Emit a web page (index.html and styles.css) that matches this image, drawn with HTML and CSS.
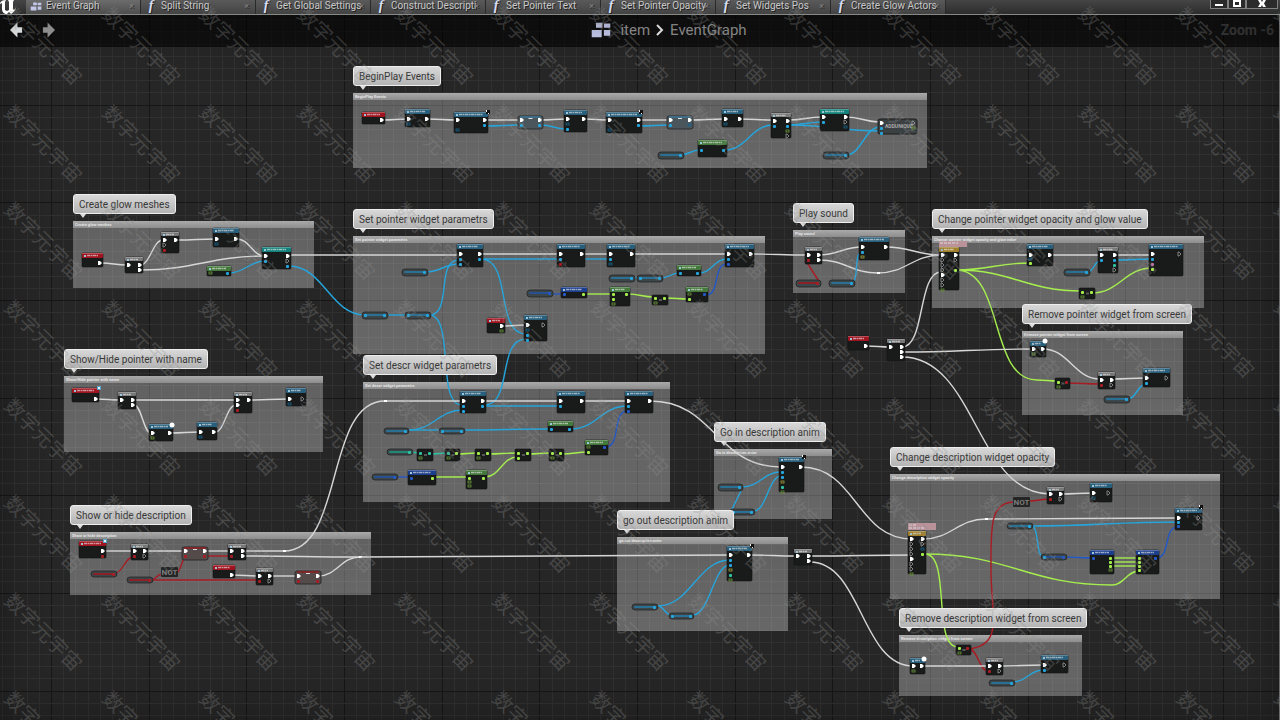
FILE: index.html
```html
<!DOCTYPE html>
<html lang="en">
<head>
    <meta charset="UTF-8">
    <meta name="viewport" content="width=device-width, initial-scale=1.0">
    <title>Event Graph</title>
    <link rel="stylesheet" href="styles.css">
</head>
<body>
    <!-- Tabs -->
    <header class="titlebar">
        <svg class="logo" viewBox="0 0 17 14"><path d="M0 3C1 1 3 0 6 0L5 2V10L7 11L9 10V2L8 0H14L13 2V9L14 10L16 8C15 11 13 13 11 14L9 12L7 14C4 14 2 12 2 9V3L0 4Z"/></svg>
        <nav class="tabs">
            <button class="tab active"><svg class="grid-icon" viewBox="0 0 28 22"><path d="M7 1h9v7H7zM18 2h9v6h-9zM1 11h14v10H1zM18 11h9v8h-9z"/></svg>Event Graph<span class="close">×</span></button>
            <button class="tab"><i class="fn">f</i>Split String<span class="close">×</span></button>
            <button class="tab"><i class="fn">f</i>Get Global Settings<span class="close">×</span></button>
            <button class="tab"><i class="fn">f</i>Construct Descripti<span class="close">×</span></button>
            <button class="tab"><i class="fn">f</i>Set Pointer Text<span class="close">×</span></button>
            <button class="tab"><i class="fn">f</i>Set Pointer Opacity<span class="close">×</span></button>
            <button class="tab"><i class="fn">f</i>Set Widgets Pos<span class="close">×</span></button>
            <button class="tab"><i class="fn">f</i>Create Glow Actors<span class="close">×</span></button>
        </nav>
        <div class="window-buttons">
            <button aria-label="Minimize"><svg viewBox="0 0 10 8"><path d="M1 4h8v2H1z"/></svg></button>
            <button aria-label="Restore"><svg viewBox="0 0 10 8"><path fill-rule="evenodd" d="M1 0h8v7H1zM3 2v3h4V2z"/></svg></button>
            <button class="wide" aria-label="Close"><svg viewBox="0 0 10 8"><path d="M1 0h3l1 2 1-2h3L7 3.500 9 7H6L5 5 4 7H1l2-3.500z"/></svg></button>
        </div>
    </header>

    <main class="graph">
        <svg id="grid" class="layer"></svg>

        <div class="breadcrumb">
            <div class="history">
                <button aria-label="Back"><svg viewBox="0 0 14 16"><path d="M0 8l8-8v5h5v6H8v5z"/></svg></button>
                <button aria-label="Forward" class="dim"><svg viewBox="0 0 14 16"><path d="M14 8L6 0v5H1v6h5v5z"/></svg></button>
            </div>
            <div class="path">
                <svg class="grid-icon" viewBox="0 0 28 22"><path d="M7 1h9v7H7zM18 2h9v6h-9zM1 11h14v10H1zM18 11h9v8h-9z"/></svg>
                <a href="#">item</a>
                <svg class="chevron" viewBox="0 0 8 12"><path d="M1 1l5 5-5 5"/></svg>
                <a href="#">EventGraph</a>
            </div>
            <div class="zoom">Zoom -6</div>
        </div>

        <!-- Comment boxes -->
        <section class="comment begin-play"><h2>BeginPlay Events</h2><p class="bubble">BeginPlay Events</p></section>
        <section class="comment glow-meshes"><h2>Create glow meshes</h2><p class="bubble">Create glow meshes</p></section>
        <section class="comment pointer-name"><h2>Show/Hide pointer with name</h2><p class="bubble">Show/Hide pointer with name</p></section>
        <section class="comment show-descr"><h2>Show or hide description</h2><p class="bubble">Show or hide description</p></section>
        <section class="comment pointer-params"><h2>Set pointer widget parametrs</h2><p class="bubble">Set pointer widget parametrs</p></section>
        <section class="comment descr-params"><h2>Set descr widget parametrs</h2><p class="bubble">Set descr widget parametrs</p></section>
        <section class="comment play-sound"><h2>Play sound</h2><p class="bubble">Play sound</p></section>
        <section class="comment pointer-opacity"><h2>Change pointer widget opacity and glow value</h2><p class="bubble">Change pointer widget opacity and glow value</p></section>
        <section class="comment remove-pointer"><h2>Remove pointer widget from screen</h2><p class="bubble">Remove pointer widget from screen</p></section>
        <section class="comment go-in"><h2>Go in description anim</h2><p class="bubble">Go in description anim</p></section>
        <section class="comment go-out"><h2>go out description anim</h2><p class="bubble">go out description anim</p></section>
        <section class="comment descr-opacity"><h2>Change description widget opacity</h2><p class="bubble">Change description widget opacity</p></section>
        <section class="comment remove-descr"><h2>Remove description widget from screen</h2><p class="bubble">Remove description widget from screen</p></section>

        <svg id="nodes" class="layer"></svg>
    </main>

    <svg id="watermark" class="watermark"></svg>

    <script src="graph.js"></script>
</body>
</html>
```

FILE: styles.css
```css
* {
    box-sizing: border-box;
}

body {
    margin: 0;
    min-height: 100vh;
    display: flex;
    flex-direction: column;
    position: relative;
    overflow: hidden;
    font-family: Roboto, 'Noto Sans CJK SC', sans-serif;
    font-size: 10px;
    background-color: #262626;
    color: #ccc;
}

button {
    margin: 0;
    padding: 0;
    border: none;
    background: none;
    color: inherit;
    font: inherit;
    cursor: pointer;
}

/* Title bar */
.titlebar {
    height: 15px;
    display: flex;
    background: linear-gradient(#454545, #2c2c2c);
    border-bottom: 1px solid #868986;
}

.logo {
    width: 17px;
    height: 14px;
    margin-right: 9px;
    fill: #fff;
}

.tabs {
    display: flex;
    flex: 1;
}

.tab {
    position: relative;
    width: 115px;
    height: 14px;
    padding: 0 0 2px 4px;
    display: flex;
    align-items: center;
    gap: 4px;
    line-height: 12px;
    white-space: nowrap;
    color: #c8c8c8;
    text-shadow: 1px 1px 0 #222;
    background: linear-gradient(#5a5a5a, #434343);
    border-right: 1px solid #2a2a2a;
}

.tab.active {
    background: linear-gradient(#6c6c6c, #4e4e4e);
}

.tab .grid-icon {
    width: 12px;
    height: 9px;
}

.grid-icon {
    fill: #c3c8ea;
}

.fn {
    flex: none;
    width: 12px;
    text-align: center;
    font: italic bold 14px/12px 'Liberation Serif', serif;
    color: #d6def5;
}

.close {
    position: absolute;
    right: 6px;
    top: 0;
    color: #858585;
    font-size: 9px;
}

.window-buttons {
    display: flex;
    height: 9px;
    margin-right: 2px;
}

.window-buttons button {
    width: 18px;
    height: 9px;
    display: flex;
    justify-content: center;
    border: 1px solid #808080;
    border-top: none;
    background-color: #2b2b2b;
}

.window-buttons .wide {
    width: 32px;
}

.window-buttons svg {
    width: 10px;
    height: 8px;
    fill: #fff;
}

/* Graph */
.graph {
    flex: 1;
    position: relative;
    overflow: hidden;
    border-right: 1px solid #6a6a6a;
    background-color: #262626;
}

.graph::after {
    content: '';
    position: absolute;
    inset: 0;
    box-shadow: inset 0 0 40px rgba(0, 0, 0, 0.35);
    pointer-events: none;
}

.layer {
    position: absolute;
    left: 0;
    top: 0;
    width: 100%;
    height: 100%;
    pointer-events: none;
}

#nodes {
    z-index: 2;
}

.breadcrumb {
    position: relative;
    height: 32px;
    padding: 0 5px 2px 10px;
    display: grid;
    grid-template-columns: 1fr auto 1fr;
    align-items: center;
    background-color: rgba(0, 0, 0, 0.6);
}

.history {
    display: flex;
    gap: 19px;
}

.history svg {
    display: block;
    width: 13px;
    height: 16px;
    fill: #f4f8f8;
}

.history .dim svg {
    fill: #999;
}

.path {
    display: flex;
    align-items: center;
    gap: 6px;
    margin-left: 54px;
    font-size: 15px;
}

.path .grid-icon {
    width: 20px;
    height: 16px;
    margin-right: 3px;
}

.path a {
    color: #8f8f8f;
    text-decoration: none;
}

.chevron {
    width: 8px;
    height: 12px;
    fill: none;
    stroke: #eee;
    stroke-width: 2;
}

.zoom {
    justify-self: end;
    font-size: 14px;
    font-weight: bold;
    color: #363636;
}

/* Comments */
.comment {
    position: absolute;
    background: linear-gradient(rgba(255, 255, 255, 0.27), rgba(255, 255, 255, 0.3));
}

.comment h2 {
    margin: 0;
    height: 7px;
    padding: 1px 2px;
    font-size: 4px;
    line-height: 6px;
    font-weight: bold;
    white-space: nowrap;
    color: #e4e4e4;
    background: linear-gradient(#aaa, #8d8d8d);
}

.bubble {
    position: absolute;
    z-index: 3;
    left: 0;
    top: -27px;
    height: 20px;
    margin: 0;
    padding: 0 5px;
    font-size: 10px;
    line-height: 19px;
    white-space: nowrap;
    color: #383838;
    background: linear-gradient(#d8d8d8, #b4b4b4);
    border: 1px solid #eee;
    border-radius: 3px;
}

.bubble::after {
    content: '';
    position: absolute;
    left: 6px;
    top: 19px;
    border: 3px solid transparent;
    border-top: 4px solid #ddd;
    border-bottom: none;
}

.begin-play { left: 353px; top: 78px; width: 574px; height: 75px; }
.glow-meshes { left: 73px; top: 206px; width: 241px; height: 67px; }
.pointer-name { left: 64px; top: 361px; width: 259px; height: 76px; }
.show-descr { left: 70px; top: 517px; width: 301px; height: 63px; }
.pointer-params { left: 353px; top: 221px; width: 412px; height: 118px; }
.descr-params { left: 363px; top: 367px; width: 307px; height: 120px; }
.play-sound { left: 793px; top: 215px; width: 112px; height: 63px; }
.pointer-opacity { left: 932px; top: 221px; width: 272px; height: 72px; }
.remove-pointer { left: 1022px; top: 316px; width: 161px; height: 84px; }
.go-in { left: 714px; top: 434px; width: 118px; height: 70px; }
.go-out { left: 617px; top: 522px; width: 171px; height: 94px; }
.descr-opacity { left: 890px; top: 459px; width: 330px; height: 125px; }
.remove-descr { left: 899px; top: 620px; width: 183px; height: 61px; }

/* Nodes and wires */
.wire {
    fill: none;
    stroke-width: 1.400;
}

.node-text {
    font-size: 5px;
    font-weight: bold;
    fill: #aaa;
}

.node-text.not {
    font-size: 8px;
    fill: #7c7c7c;
}

.watermark {
    position: absolute;
    z-index: 5;
    left: 0;
    top: 0;
    width: 100%;
    height: 100%;
    pointer-events: none;
    font-family: 'Noto Sans CJK SC', sans-serif;
    font-size: 20px;
    fill: rgba(145, 145, 145, 0.3);
}
```

FILE: graph.js
```js
const colors = {
    w: '#d6d6d6', b: '#25a5dc', U: '#2458c4', g: '#a5ee4e', r: '#a81c24', t: '#2fc0a0',
    B: '#17648c', G: '#6c9a3c', Y: '#a8a03a', p: '#c070a0'
};

const heads = {
    red: '#a01420', cyan: '#285f7c', gray: '#777', teal: '#12837c',
    green: '#437a3b', navy: '#1b3f8c', gold: '#a08028'
};

// type, x, y, width, height, left pins, right pins, first pin y, pin step
const nodes = [
    ['red', 362, 112, 23, 12, '', 'w', 8],
    ['cyan', 405, 109, 25, 18, 'wB', 'w', 10],
    ['cyan', 454, 112, 34, 21, 'w.B', 'wb', 8],
    ['set', 518, 116, 25, 13, 'wb', 'wb', 4],
    ['cyan', 564, 110, 23, 22, 'wBb', 'w', 9],
    ['cyan', 606, 112, 36, 21, 'w.B', 'wb', 8],
    ['set', 667, 116, 26, 13, 'wb', 'wB', 4],
    ['cyan', 722, 109, 21, 18, 'wB', 'w', 10],
    ['pill', 658, 152, 26, 7, '', 'b'],
    ['green', 698, 140, 29, 17, 'b', 'b', 10],
    ['gray', 771, 113, 20, 25, 'wb', 'wbGo', 8],
    ['teal', 820, 109, 29, 22, 'wb', 'woB', 8],
    ['unique', 878, 119, 39, 15, 'wbb', 'oG', 4],
    ['pill', 823, 152, 26, 7, '', 'b'],

    ['red', 82, 253, 21, 14, '', 'w', 10],
    ['gray', 125, 257, 18, 16, 'w', 'ww', 8],
    ['gray', 161, 232, 18, 21, 'wor', 'w', 8],
    ['cyan', 213, 228, 26, 19, 'wB', 'w', 11],
    ['teal', 262, 247, 29, 22, 'wb', 'wob', 9],
    ['green', 207, 266, 24, 10, 'G', 'b', 7],

    ['red', 72, 388, 27, 14, '', 'w', 11],
    ['gray', 118, 392, 18, 17, 'w', 'ww', 8],
    ['cyan', 149, 424, 24, 17, 'wG', 'w', 9],
    ['cyan', 197, 422, 20, 18, 'wB', 'w', 10],
    ['gray', 234, 392, 18, 21, 'wwr', 'w', 8],
    ['cyan', 286, 388, 20, 18, 'wB', 'o', 11],

    ['pill', 402, 269, 26, 7, '', 'b'],
    ['cyan', 457, 244, 26, 23, 'wbb', 'wb', 10],
    ['cyan', 557, 244, 28, 23, 'wbr', 'w', 10],
    ['cyan', 607, 244, 28, 23, 'wbB', 'w', 10],
    ['cyan', 725, 244, 29, 23, 'wbU', 'w', 10],
    ['pill', 609, 275, 26, 7, '', 'b'],
    ['pill', 637, 275, 26, 7, 'b', 'b'],
    ['green', 677, 265, 24, 11, 'b', 'b', 8],
    ['pillBlue', 527, 290, 26, 7, '', 'U'],
    ['navy', 561, 287, 26, 11, 'U', 'g', 7],
    ['green', 610, 287, 20, 19, 'ggG', 'g', 7],
    ['op', 652, 295, 16, 10, 'gG', 'g', 3],
    ['green', 686, 287, 22, 15, 'Gg', 'U', 7],
    ['red', 487, 318, 18, 15, '', 'wG', 8],
    ['cyan', 524, 315, 23, 26, 'wBbb', 'o', 10],
    ['pill', 362, 312, 26, 7, 'b', 'b'],
    ['pill', 405, 312, 26, 7, 'b', 'b'],

    ['gray', 805, 247, 17, 17, 'wr', 'ww', 8],
    ['cyan', 859, 237, 30, 23, 'wbY', 'w', 10],
    ['pillRed', 796, 280, 25, 7, '', 'r'],
    ['pill', 829, 280, 26, 7, '', 'b'],

    ['gold', 939, 247, 20, 43, 'wooowooG', 'wo.g', 8],
    ['cyan', 1027, 244, 26, 22, 'wBg', 'w', 11, 4],
    ['gray', 1098, 247, 20, 26, 'wb', 'wbto', 8],
    ['cyan', 1149, 244, 34, 32, 'wbpg', 'o', 10],
    ['pill', 1064, 269, 26, 7, '', 'b'],
    ['op', 1079, 288, 16, 11, 'gG', 'g', 4],
    ['red', 848, 336, 21, 14, '', 'w', 10],
    ['gray', 887, 339, 18, 22, 'w', 'www', 8],

    ['cyan', 1030, 341, 16, 16, 'wG', 'w', 8],
    ['op', 1055, 378, 15, 11, 'gG', 'r', 4],
    ['gray', 1098, 372, 17, 17, 'wr', 'wo', 8],
    ['cyan', 1143, 368, 27, 19, 'wb', 'o', 10],
    ['pill', 1104, 396, 26, 7, '', 'b'],

    ['cyan', 460, 391, 26, 22, 'wbb', 'wb', 10],
    ['cyan', 557, 391, 28, 22, 'wb', 'w', 10],
    ['cyan', 625, 391, 28, 22, 'wbU', 'w', 10],
    ['pill', 384, 428, 25, 6, '', 'b'],
    ['pill', 439, 428, 26, 6, 'b', 'b'],
    ['green', 548, 421, 25, 11, 'b', 'b', 8],
    ['green', 585, 440, 23, 15, 'Gg', 'U', 7],
    ['pillTeal', 387, 449, 26, 6, '', 't'],
    ['op', 417, 449, 16, 12, 'tG', 't', 4],
    ['op', 445, 449, 15, 12, 'tG', 'g', 4],
    ['op', 475, 449, 16, 12, 'gG', 'g', 4],
    ['op', 515, 449, 16, 12, 'gg', 'g', 4],
    ['op', 549, 449, 15, 12, 'gG', 'g', 4],
    ['pillBlue', 372, 474, 26, 6, '', 'U'],
    ['navy', 408, 470, 28, 15, 'U', 'g', 8],
    ['green', 466, 470, 21, 19, 'gGG', 'g', 8, 4],

    ['red', 79, 541, 27, 17, '', 'wr', 10],
    ['gray', 131, 544, 17, 16, 'wr', 'wo', 7],
    ['setRed', 182, 547, 26, 13, 'wr', 'wr', 4],
    ['gray', 228, 544, 18, 16, 'wr', 'ww', 7],
    ['pillRed', 91, 571, 26, 6, '', 'r'],
    ['pillRed', 127, 577, 26, 6, '', 'r'],
    ['not', 161, 567, 17, 10, '', ''],
    ['red', 213, 565, 22, 13, '', 'w', 10],
    ['gray', 256, 568, 17, 17, 'wr', 'wo', 8],
    ['setRed', 295, 571, 26, 13, 'wr', 'wr', 5],

    ['cyan', 779, 457, 25, 35, 'wbbYtG', 'w', 10],
    ['pill', 718, 484, 25, 7, '', 'b'],
    ['pill', 730, 509, 25, 6, 'b', 'b'],
    ['cyan', 727, 546, 25, 35, 'wbbYtG', 'w', 9],
    ['pill', 632, 604, 26, 6, '', 'b'],
    ['pill', 669, 613, 25, 6, 'b', 'b'],
    ['gray', 794, 549, 18, 16, 'w', 'ww', 7],

    ['gold', 908, 531, 18, 43, 'wooowooG', 'woBg', 8],
    ['gray', 1047, 487, 17, 17, 'wr', 'wo', 7],
    ['cyan', 1090, 483, 22, 19, 'wB', 'o', 10],
    ['not', 1013, 497, 17, 10, '', ''],
    ['cyan', 1175, 508, 27, 22, 'wbU', 'o', 10, 4],
    ['pill', 1007, 523, 26, 6, '', 'b'],
    ['pillBlue', 1041, 554, 26, 6, 'b', 'U'],
    ['navy', 1090, 550, 24, 24, 'U', 'gggG', 8, 4],
    ['navy', 1136, 550, 23, 24, 'gggg', 'U', 8, 4],

    ['cyan', 910, 658, 15, 16, 'wG', 'w', 8],
    ['op', 956, 645, 15, 10, 'gG', 'r', 3],
    ['gray', 986, 658, 17, 17, 'wr', 'wo', 8],
    ['cyan', 1041, 655, 27, 18, 'wb', 'o', 10],
    ['pill', 989, 680, 26, 6, '', 'b']
];

// color, x1, y1, x2, y2, optional curve strength
const wires = [
    ['w', 383, 120, 407, 119], ['w', 428, 119, 456, 120], ['w', 486, 120, 520, 120], ['w', 541, 120, 566, 119],
    ['w', 585, 119, 608, 120], ['w', 640, 120, 669, 120], ['w', 691, 120, 724, 119], ['w', 740, 119, 773, 120],
    ['w', 789, 120, 822, 117], ['w', 846, 117, 880, 122], ['b', 486, 126, 520, 125], ['b', 541, 125, 566, 129],
    ['b', 640, 126, 669, 125], ['b', 680, 155, 700, 150], ['b', 725, 150, 773, 125], ['b', 789, 125, 822, 122],
    ['b', 789, 125, 880, 131], ['b', 846, 155, 880, 127],

    ['w', 101, 263, 127, 265], ['w', 140, 265, 163, 240], ['w', 177, 240, 216, 239], ['w', 140, 270, 265, 256],
    ['w', 237, 239, 265, 256], ['w', 289, 255, 459, 255], ['b', 229, 273, 265, 261], ['b', 289, 266, 365, 315],

    ['w', 96, 399, 120, 400], ['w', 134, 400, 236, 400], ['w', 134, 405, 151, 433], ['w', 171, 433, 199, 432],
    ['w', 215, 432, 236, 405], ['w', 249, 400, 288, 399],

    ['w', 481, 254, 559, 254], ['w', 583, 254, 609, 254], ['w', 633, 254, 727, 254], ['w', 751, 254, 807, 255],
    ['b', 426, 272, 459, 264], ['b', 386, 315, 407, 315], ['b', 429, 315, 459, 260, 0.8], ['b', 429, 315, 462, 405, 0.8],
    ['b', 481, 259, 559, 259], ['b', 583, 259, 609, 259], ['b', 481, 259, 526, 334, 0.7], ['b', 484, 405, 526, 339, 0.7],
    ['b', 633, 278, 639, 278], ['b', 661, 278, 679, 273], ['b', 699, 273, 727, 259],
    ['U', 551, 294, 563, 294], ['U', 706, 295, 727, 264, 0.7], ['g', 585, 294, 612, 294], ['g', 628, 294, 654, 297],
    ['g', 666, 298, 688, 299], ['w', 503, 326, 526, 325],

    ['w', 819, 255, 862, 247], ['w', 819, 260, 878, 273], ['w', 878, 273, 941, 255], ['w', 886, 247, 941, 255],
    ['r', 820, 283, 806, 261, 0], ['b', 851, 283, 862, 252, 0.8],

    ['w', 956, 255, 1030, 255], ['w', 1050, 255, 1100, 255], ['w', 1116, 255, 1152, 255], ['b', 1088, 272, 1100, 261],
    ['b', 1116, 260, 1152, 259], ['g', 956, 270, 1030, 263], ['g', 956, 270, 1082, 291], ['g', 1092, 293, 1152, 268],
    ['g', 956, 270, 1037, 380, 0.6], ['g', 1037, 380, 1058, 381], ['w', 866, 346, 890, 347],
    ['w', 902, 347, 941, 272, 0.6], ['w', 902, 352, 1032, 349], ['w', 902, 357, 1050, 494, 0.5],

    ['w', 1043, 349, 1100, 379], ['w', 1112, 379, 1146, 378], ['b', 1128, 399, 1146, 384], ['r', 1068, 383, 1100, 384],

    ['w', 284, 551, 385, 401, 0.6], ['w', 385, 401, 463, 401], ['w', 484, 401, 559, 401], ['w', 583, 401, 627, 401],
    ['w', 650, 401, 781, 467, 0.5], ['b', 409, 430, 463, 410], ['b', 409, 430, 441, 430], ['b', 463, 430, 550, 429],
    ['b', 571, 429, 627, 406], ['b', 484, 406, 559, 406], ['t', 411, 452, 419, 453], ['t', 431, 454, 447, 453],
    ['g', 458, 454, 477, 453], ['g', 488, 454, 517, 453], ['g', 528, 454, 551, 453], ['g', 562, 454, 588, 452],
    ['g', 485, 477, 517, 457], ['g', 434, 477, 468, 477], ['U', 396, 477, 410, 477], ['U', 606, 447, 627, 411, 0.7],

    ['w', 102, 551, 133, 551], ['w', 144, 551, 186, 551], ['w', 204, 551, 230, 551], ['w', 242, 551, 284, 551],
    ['w', 242, 556, 360, 557], ['w', 232, 575, 259, 576], ['w', 269, 576, 299, 576], ['w', 318, 576, 360, 557],
    ['w', 360, 557, 730, 555], ['r', 115, 573, 133, 557], ['r', 151, 580, 162, 574], ['r', 151, 580, 258, 580],
    ['r', 177, 572, 186, 557], ['r', 204, 556, 230, 556],

    ['w', 801, 467, 912, 539, 0.5], ['b', 742, 487, 781, 472], ['b', 742, 487, 732, 511, -0.2], ['b', 754, 511, 781, 476],
    ['w', 750, 555, 797, 556], ['w', 810, 556, 912, 555], ['w', 810, 562, 913, 666, 0.5], ['b', 658, 606, 730, 560],
    ['b', 658, 606, 671, 615], ['b', 693, 615, 730, 565],

    ['w', 923, 539, 986, 519], ['w', 986, 519, 1178, 518], ['w', 1061, 494, 1093, 493], ['b', 1031, 526, 1178, 522],
    ['b', 1031, 526, 1044, 557, 0.7], ['U', 1065, 557, 1093, 558], ['U', 1156, 558, 1178, 527, 0.7],
    ['g', 1110, 558, 1139, 558], ['g', 1110, 562, 1139, 562], ['g', 1110, 566, 1139, 566],
    ['g', 925, 554, 1112, 585], ['g', 1112, 585, 1139, 571], ['g', 925, 554, 958, 647, 0.8],
    ['r', 1029, 501, 1050, 499], ['r', 969, 649, 988, 671],

    ['w', 923, 666, 988, 666], ['w', 1000, 666, 1043, 665], ['b', 1013, 682, 1043, 670]
];

// small corner marks on latent / event nodes and reroute dots
const badges = [
    ['clock', 488, 112], ['clock', 641, 112], ['clock', 804, 457], ['clock', 752, 546], ['clock', 1201, 507],
    ['event', 99, 388], ['event', 105, 541], ['round', 172, 425], ['round', 1045, 341], ['round', 924, 659],
    ['dot', 284, 551], ['dot', 360, 557], ['dot', 385, 401], ['dot', 878, 273], ['dot', 986, 519]
];

const rect = (x, y, w, h, fill, extra = '') =>
    `<rect x="${x}" y="${y}" width="${w}" height="${h}" fill="${fill}" ${extra}/>`;

function drawGrid() {
    let out = '';
    const width = Math.max(window.innerWidth, 1280);
    const height = Math.max(window.innerHeight, 720);
    for (let i = -4; i * 293 / 24 < width; i++) {
        out += rect(Math.round(51 + i * 293 / 24), 0, 1, height, i % 8 ? '#303030' : '#161616');
    }
    for (let i = 0; i * 293 / 24 < height; i++) {
        out += rect(0, Math.round(i * 293 / 24 - 8), width, 1, i % 8 ? '#303030' : '#161616');
    }
    document.getElementById('grid').innerHTML = out;
}

function drawPin(kind, x, y) {
    if (kind === '.') return '';
    if (kind === 'w') return `<path d="M${x - 1} ${y - 2}h2l2 2-2 2h-2z" fill="#fff"/>`;
    if (kind === 'o') return `<path d="M${x - 1} ${y - 2}h1l2 2-2 2h-1z" fill="none" stroke="#aaa" stroke-width="0.7"/>`;
    if (kind === 'G' || kind === 'B' || kind === 'Y') {
        return rect(x - 1, y - 1, 3, 2, 'none', `stroke="${colors[kind]}" stroke-width="0.8"`);
    }
    return rect(x - 1, y - 1, 3, 3, colors[kind], 'rx="1"');
}

function drawNode([type, x, y, w, h, left, right, first = 3, step = 5]) {
    let out = '';
    if (type.startsWith('pill')) {
        const tint = { pill: '#2b6f93', pillRed: '#8c2026', pillBlue: '#274f92', pillTeal: '#238672' }[type];
        out += rect(x, y, w, h, '#3c4548', 'rx="3" stroke="#262626" stroke-width="0.8"');
        out += rect(x + 2, y + 2, w - 4, 2, tint, 'rx="1"');
    } else if (type === 'set' || type === 'setRed') {
        out += rect(x, y, w, h, type === 'set' ? '#4a565c' : '#544a4a', 'rx="2" stroke="#2c2c2c"');
        out += rect(x + 2, y, w - 4, 2, type === 'set' ? '#3f7694' : '#8c2026', 'opacity="0.8"');
        out += rect(x + w / 2 - 2, y + 2, 4, 1, '#ddd');
    } else if (type === 'not') {
        out += rect(x, y, w, h, '#252525', 'rx="1"');
        out += `<text class="node-text not" x="${x + w / 2}" y="${y + 8}" text-anchor="middle">NOT</text>`;
    } else if (type === 'unique') {
        out += rect(x, y, w, h, '#3b4043', 'rx="2" stroke="#1c1c1c"');
        out += `<text class="node-text" x="${x + 7}" y="${y + 9}">ADDUNIQUE</text>`;
    } else {
        out += rect(x, y, w, h, '#191b1a', 'rx="1" stroke="#101010" stroke-width="0.6"');
        if (type === 'op') {
            out += rect(x + w / 2 - 1, y + h / 2 - 1, 3, 2, '#555');
        } else {
            const head = type === 'gray' ? 4 : 5;
            out += rect(x, y, w, head, heads[type], 'rx="1"');
            out += rect(x, y, w, 1, '#fff', 'opacity="0.25"');
            out += `<path d="M${x + 5} ${y + 2.5}H${x + w - 5}" stroke="#e4e4e4" stroke-width="1.5" stroke-dasharray="3 0.5 2 0.5" opacity="0.65"/>`;
            out += rect(x + 2, y + 2, 2, 2, '#9fc6d8');
        }
    }
    [...left].forEach((p, i) => out += drawPin(p, x + 3, y + first + i * step));
    [...right].forEach((p, i) => out += drawPin(p, x + w - 4, y + first + i * step));
    return out;
}

function drawWire([color, x1, y1, x2, y2, bend = 0.45]) {
    const d = (x2 - x1) * bend;
    return `<path class="wire" stroke="${colors[color]}" d="M${x1} ${y1}C${x1 + d} ${y1} ${x2 - d} ${y2} ${x2} ${y2}"/>`;
}

function drawBadge([kind, x, y]) {
    if (kind === 'round') return `<circle cx="${x}" cy="${y}" r="2.500" fill="#fff"/>`;
    if (kind === 'dot') return rect(x - 1, y - 1, 3, 2, '#fff');
    if (kind === 'event') return rect(x - 2, y - 2, 4, 4, '#5ba3c4') + rect(x - 1, y - 1, 2, 2, '#e0f0f8');
    return rect(x - 2, y - 2, 4, 4, '#111') + rect(x - 2, y - 2, 1, 2, '#eee') + rect(x, y + 1, 1, 1, '#eee');
}

function drawNodes() {
    let out = wires.map(drawWire).join('');
    // long wire from the comparison up to NOT
    out += `<path class="wire" stroke="${colors.r}" d="M969 649C1004 645 991 615 991 570C991 530 989 502 1014 502"/>`;
    out += nodes.map(drawNode).join('');
    out += rect(939, 241, 28, 6, '#b9929a') + rect(908, 523, 28, 7, '#b9929a');
    out += `<path d="M940 243H958M909 525H916M909 528H924" stroke="#eee" stroke-dasharray="3 1" opacity="0.8"/>`;
    out += badges.map(drawBadge).join('');
    // node coordinates count from the window top, the layer starts under the tabs
    document.getElementById('nodes').innerHTML = `<g transform="translate(0 -15)">${out}</g>`;
}

function drawWatermark() {
    let out = '';
    for (let row = 0; row < 8; row++) {
        for (let col = 0; col < 14; col++) {
            const x = Math.round(15 + col * 293 / 3);
            const y = Math.round(18 + row * 293 / 3);
            out += `<text transform="translate(${x} ${y}) rotate(45)" x="-10" y="7">数字元宇宙</text>`;
        }
    }
    document.getElementById('watermark').innerHTML = out;
}

drawGrid();
drawNodes();
drawWatermark();
```
